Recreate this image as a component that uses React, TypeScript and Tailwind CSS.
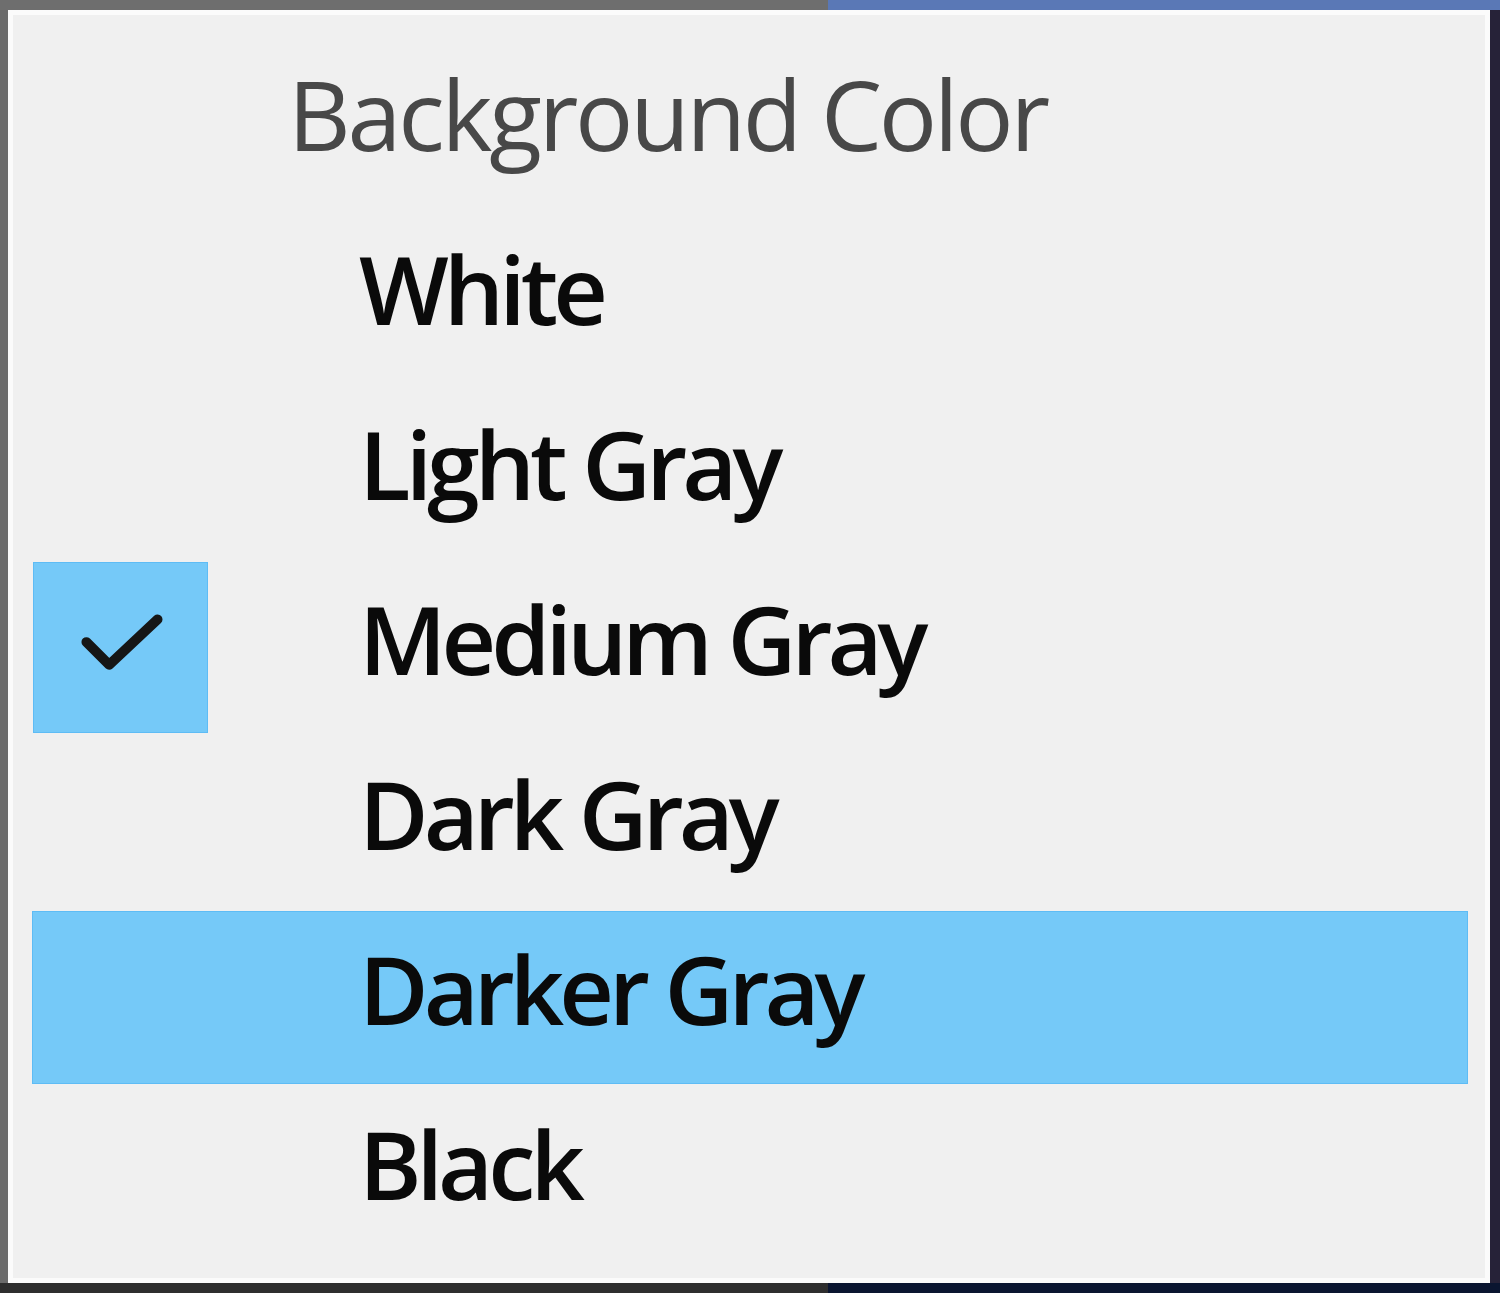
import React from "react";

const items = ["White", "Light Gray", "Medium Gray", "Dark Gray", "Darker Gray", "Black"];

function Check() {
  return (
    <svg width="175" height="172" viewBox="0 0 175 172">
      <path d="M53 80 L76 103 L125 57" fill="none" stroke="#161616" strokeWidth="10" strokeLinecap="round" strokeLinejoin="round" />
    </svg>
  );
}

export default function App() {
  return (
    <div className="w-[1500px] h-[1293px] flex flex-col overflow-hidden" style={{ fontFamily: '"Open Sans", "Noto Sans", sans-serif' }}>
      <div className="h-[10px] flex shrink-0">
        <div className="w-[828px] bg-[#6e6e6e]" />
        <div className="flex-1 bg-[#5a78b6]" />
      </div>
      <div className="flex-1 flex min-h-0">
        <div className="w-[8px] bg-[#6b6b6b]" />
        <div className="flex-1 bg-[#f0f0f0] border-[5px] border-[#fbfbfb] pt-[20px] pb-[18px] flex flex-col">
          <div className="h-[175px] flex items-center pb-[18px] pl-[275px] text-[97px] tracking-[-3.2px] text-[#484848] font-normal">
            Background Color
          </div>
          {items.map((it) => {
            const highlighted = it === "Darker Gray";
            const checked = it === "Medium Gray";
            return (
              <div key={it} className="h-[175px] flex py-[1px] pl-[19px] pr-[17px]">
                <div className={`flex-1 flex items-stretch ${highlighted ? "bg-[#75c9f8] border border-[#5ebcf5]" : "border border-transparent"}`}>
                  <div className={`w-[175px] shrink-0 flex items-center justify-center ${checked ? "bg-[#75c9f8] border border-[#5ebcf5]" : ""}`}>
                    {checked && <Check />}
                  </div>
                  <div className="flex items-center pb-[18px] pl-[151px] text-[95px] tracking-[-5px] text-[#0a0a0a] font-semibold">
                    {it}
                  </div>
                </div>
              </div>
            );
          })}
        </div>
        <div className="w-[10px] bg-[#262238]" />
      </div>
      <div className="h-[10px] flex shrink-0">
        <div className="w-[828px] bg-[#2e2e2e]" />
        <div className="flex-1 bg-[#0a1530]" />
      </div>
    </div>
  );
}
